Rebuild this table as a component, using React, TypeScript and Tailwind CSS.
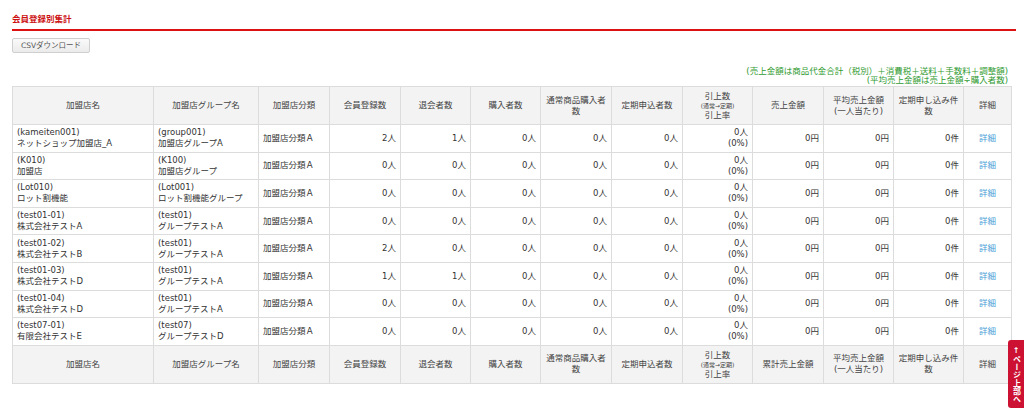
import React from "react";

type Row = {
  code: string;
  name: string;
  gcode: string;
  gname: string;
  reg: string;
  quit: string;
};

const rows: Row[] = [
  { code: "(kameiten001)", name: "ネットショップ加盟店_A", gcode: "(group001)", gname: "加盟店グループA", reg: "2人", quit: "1人" },
  { code: "(K010)", name: "加盟店", gcode: "(K100)", gname: "加盟店グループ", reg: "0人", quit: "0人" },
  { code: "(Lot010)", name: "ロット割機能", gcode: "(Lot001)", gname: "ロット割機能グループ", reg: "0人", quit: "0人" },
  { code: "(test01-01)", name: "株式会社テストA", gcode: "(test01)", gname: "グループテストA", reg: "0人", quit: "0人" },
  { code: "(test01-02)", name: "株式会社テストB", gcode: "(test01)", gname: "グループテストA", reg: "2人", quit: "0人" },
  { code: "(test01-03)", name: "株式会社テストD", gcode: "(test01)", gname: "グループテストA", reg: "1人", quit: "1人" },
  { code: "(test01-04)", name: "株式会社テストD", gcode: "(test01)", gname: "グループテストA", reg: "0人", quit: "0人" },
  { code: "(test07-01)", name: "有限会社テストE", gcode: "(test07)", gname: "グループテストD", reg: "0人", quit: "0人" },
];

const widths = [141, 105, 71, 71, 70, 70, 71, 71, 70, 71, 70, 70, 48];

function HeadRow({ sales }: { sales: string }) {
  const th = "border border-[#dcdcdc] bg-[#f3f3f3] font-normal text-center align-middle px-[3px] leading-[11px] text-[#444]";
  return (
    <tr className="h-[38px]">
      <th className={th}>加盟店名</th>
      <th className={th}>加盟店グループ名</th>
      <th className={th}>加盟店分類</th>
      <th className={th}>会員登録数</th>
      <th className={th}>退会者数</th>
      <th className={th}>購入者数</th>
      <th className={th}>
        通常商品購入者
        <br />数
      </th>
      <th className={th}>定期申込者数</th>
      <th className={th}>
        <div className="leading-[10px]">引上数</div>
        <div className="text-[6px] leading-[9px]">(通常→定期)</div>
        <div className="leading-[10px]">引上率</div>
      </th>
      <th className={th}>{sales}</th>
      <th className={th}>
        平均売上金額
        <br />
        (一人当たり)
      </th>
      <th className={th}>
        定期申し込み件
        <br />数
      </th>
      <th className={th}>詳細</th>
    </tr>
  );
}

export default function App() {
  const td = "border border-[#dcdcdc] align-middle leading-[11px] text-[#333]";
  const num = `${td} text-right pr-[4px]`;
  return (
    <div
      className="relative min-h-[414px] w-[1024px] bg-white pt-[14px] pl-[12px] pr-[8px]"
      style={{ fontFamily: '"DejaVu Sans", "Noto Sans CJK JP", sans-serif' }}
    >
      <div className="text-[8.5px] font-bold leading-[11px] text-[#cc1111]">会員登録別集計</div>
      <div className="mt-[4px] h-[2px] bg-[#dd1111]" />
      <div className="mt-[7px]">
        <button className="flex h-[15px] w-[78px] items-center justify-center rounded-[2px] border border-[#cfcfcf] bg-gradient-to-b from-[#fafafa] to-[#ebebeb] text-[7.5px] text-[#555]">
          CSVダウンロード
        </button>
      </div>
      <div className="mt-[14px] w-[999px] text-right text-[8.5px] leading-[9px] text-[#2f9a2f] pr-[3px]">
        <div>(売上金額は商品代金合計（税別）＋消費税＋送料＋手数料＋調整額)</div>
        <div>(平均売上金額は売上金額÷購入者数)</div>
      </div>
      <table className="mt-[1px] w-[999px] table-fixed border-collapse text-[8.5px]">
        <colgroup>
          {widths.map((w, i) => (
            <col key={i} style={{ width: w }} />
          ))}
        </colgroup>
        <thead>
          <HeadRow sales="売上金額" />
        </thead>
        <tbody>
          {rows.map((r, i) => (
            <tr key={i} className="h-[27.6px]">
              <td className={`${td} pl-[4px]`}>
                {r.code}
                <br />
                {r.name}
              </td>
              <td className={`${td} pl-[4px]`}>
                {r.gcode}
                <br />
                {r.gname}
              </td>
              <td className={`${td} pl-[4px]`}>加盟店分類Ａ</td>
              <td className={num}>{r.reg}</td>
              <td className={num}>{r.quit}</td>
              <td className={num}>0人</td>
              <td className={num}>0人</td>
              <td className={num}>0人</td>
              <td className={num}>
                0人
                <br />
                (0%)
              </td>
              <td className={num}>0円</td>
              <td className={num}>0円</td>
              <td className={num}>0件</td>
              <td className={`${td} text-center`}>
                <span className="text-[#4a9fd8]">詳細</span>
              </td>
            </tr>
          ))}
          <HeadRow sales="累計売上金額" />
        </tbody>
      </table>
      <div className="absolute right-0 top-[340px] flex h-[68px] w-[16px] flex-col items-center justify-center rounded-l-[3px] bg-[#cc1133] text-[8px] font-bold leading-[9px] text-white">
        <span className="leading-[9px]">↑</span>
        <span style={{ writingMode: "vertical-rl" }}>ページ上部へ</span>
      </div>
    </div>
  );
}
